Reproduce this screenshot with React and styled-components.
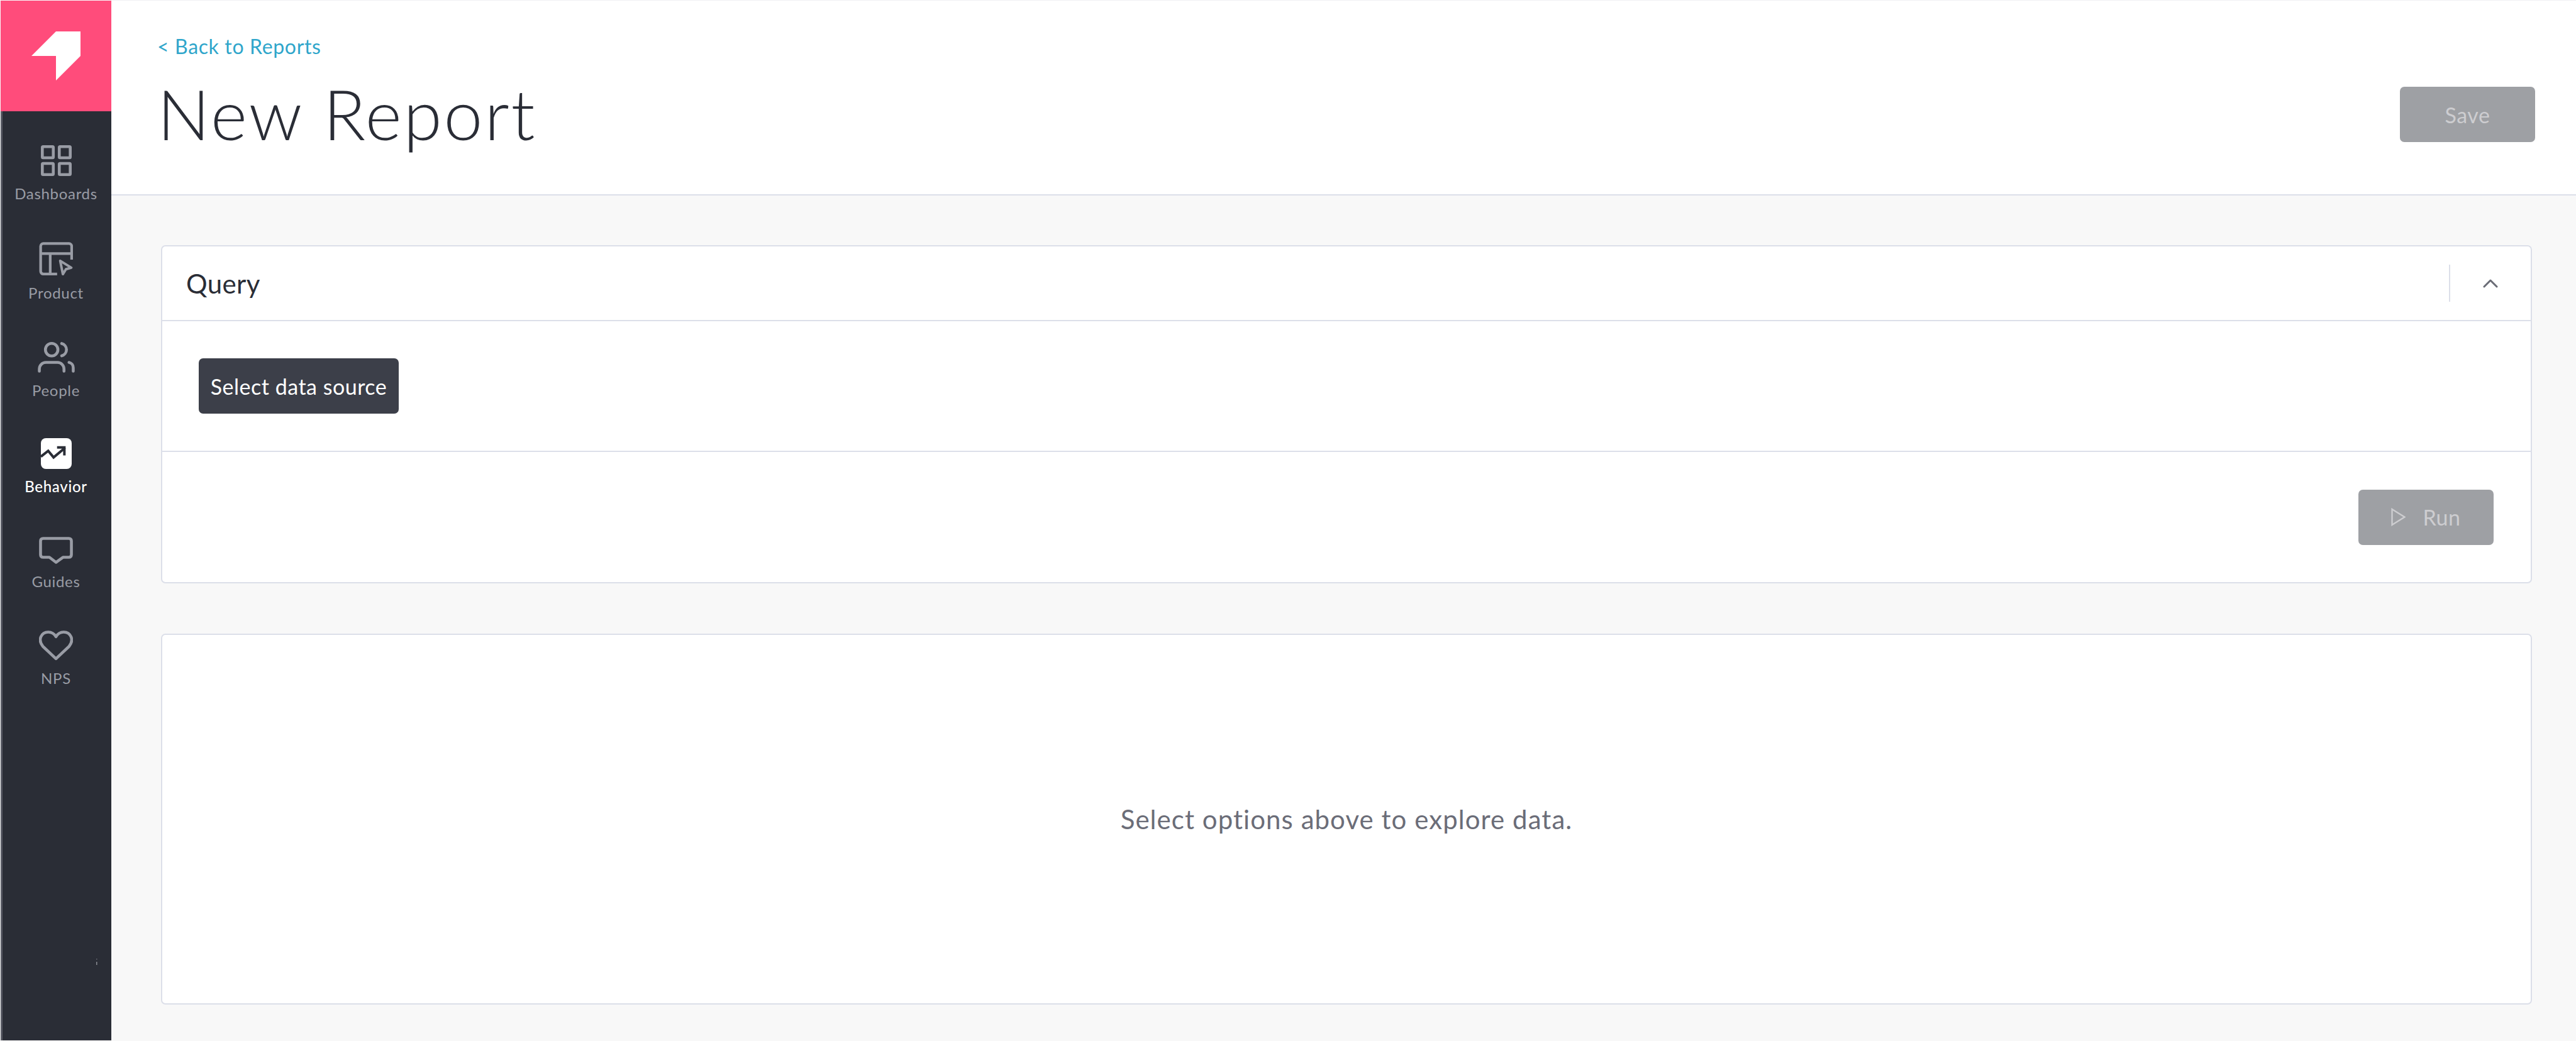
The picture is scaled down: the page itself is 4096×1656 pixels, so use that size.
import React from "react";
import styled, { createGlobalStyle } from "styled-components";

const GlobalStyle = createGlobalStyle`
  html, body {
    margin: 0;
    padding: 0;
    background: #f8f8f8;
  }
  * {
    box-sizing: border-box;
  }
`;

const FONT = `"Lato", "Open Sans", "Liberation Sans", sans-serif`;

const Shell = styled.div`
  display: flex;
  width: 100%;
  height: 100vh;
  font-family: ${FONT};
  background: #f8f8f8;
  overflow: hidden;
`;

const Sidebar = styled.aside`
  width: 176px;
  flex: none;
  margin: 1px 0 1px 1px;
  display: flex;
  flex-direction: column;
  position: relative;
  background: #2a2d36;
`;

const LogoBlock = styled.div`
  height: 176px;
  flex: none;
  display: flex;
  align-items: center;
  justify-content: center;
  background: #ff4c7b;
`;

const Nav = styled.nav`
  flex: 1;
  border-left: 3px solid #5a5c66;
  display: flex;
  flex-direction: column;
`;

const NavItem = styled.a`
  height: ${(p) => p.$height}px;
  display: flex;
  flex-direction: column;
  align-items: center;
  justify-content: flex-end;
  padding-right: 3px;
  color: ${(p) => (p.$active ? "#ffffff" : "#999ca5")};
`;

const NavLabel = styled.span`
  display: block;
  margin-top: 15px;
  font-size: 24px;
  line-height: 26px;
  font-weight: ${(p) => (p.$active ? 500 : 400)};
  letter-spacing: 0.7px;
  white-space: nowrap;
`;

const Handle = styled.svg`
  position: absolute;
  left: 151px;
  top: 1523px;
`;

const Main = styled.main`
  flex: 1;
  min-width: 0;
  display: flex;
  flex-direction: column;
`;

const Header = styled.header`
  height: 311px;
  flex: none;
  display: flex;
  justify-content: space-between;
  align-items: flex-start;
  padding: 0 65px 0 73px;
  background: #ffffff;
  border-top: 1px solid #f1f1f3;
  border-bottom: 2px solid #dcdfe9;
`;

const TitleBlock = styled.div`
  display: flex;
  flex-direction: column;
  padding-top: 51px;
`;

const BackLink = styled.a`
  font-size: 32px;
  line-height: 44px;
  color: #2fa6cb;
  letter-spacing: 0.65px;
`;

const Title = styled.h1`
  margin: 19px 0 0;
  font-size: 111px;
  line-height: 130px;
  font-weight: 300;
  letter-spacing: 2.9px;
  color: #2a2d36;
`;

const Button = styled.button`
  width: ${(p) => p.$width}px;
  height: 88px;
  flex: none;
  display: flex;
  align-items: center;
  justify-content: center;
  gap: ${(p) => p.$gap || 0}px;
  padding: 0;
  border: 0;
  border-radius: 7px;
  font-family: inherit;
  font-size: 34px;
  letter-spacing: 0.5px;
  background: ${(p) => (p.$dark ? "#3c3f49" : "#9ea0a4")};
  color: ${(p) => (p.$dark ? "#ffffff" : "#cdcdd0")};
`;

const SaveButton = styled(Button)`
  margin-top: 137px;
`;

const Content = styled.div`
  flex: 1;
  display: flex;
  flex-direction: column;
  gap: 80px;
  padding: 79px 70px 0 79px;
`;

const Card = styled.section`
  height: ${(p) => p.$height}px;
  flex: none;
  display: flex;
  flex-direction: column;
  background: #ffffff;
  border: 2px solid #dcdfe9;
  border-radius: 7px;
`;

const CardHead = styled.div`
  height: 119px;
  flex: none;
  display: flex;
  align-items: center;
  padding: 0 52px 0 38px;
  border-bottom: 2px solid #dcdfe9;
`;

const CardTitle = styled.h2`
  flex: 1;
  margin: 0;
  font-size: 42px;
  font-weight: 400;
  letter-spacing: 0.4px;
  color: #2a2d36;
`;

const HeadDivider = styled.span`
  width: 2px;
  height: 59px;
  margin-right: 52px;
  background: #dcdfe9;
`;

const CardBody = styled.div`
  height: 208px;
  flex: none;
  display: flex;
  align-items: center;
  padding-left: 58px;
  border-bottom: 2px solid #dcdfe9;
`;

const CardFooter = styled.div`
  flex: 1;
  display: flex;
  align-items: center;
  justify-content: flex-end;
  padding-right: 59px;
`;

const EmptyCard = styled(Card)`
  align-items: center;
  justify-content: center;
  font-size: 42px;
  letter-spacing: 1.05px;
  color: #6b6d78;
`;

const items = [
  {
    label: "Dashboards",
    height: 143.5,
    w: 49,
    h: 49,
    view: "0 0 80 80",
    icon: (
      <g fill="none" stroke="currentColor" strokeWidth="7.5">
        <rect x="3.75" y="3.75" width="28.5" height="29" rx="2" />
        <rect x="47.75" y="3.75" width="28.5" height="29" rx="2" />
        <rect x="3.75" y="47.25" width="28.5" height="29" rx="2" />
        <rect x="47.75" y="47.25" width="28.5" height="29" rx="2" />
      </g>
    ),
  },
  {
    label: "Product",
    height: 158.7,
    w: 54,
    h: 53,
    view: "0 0 88 87",
    icon: (
      <g fill="none" stroke="currentColor" strokeWidth="7" strokeLinejoin="round">
        <path d="M47 83.5H11a7 7 0 0 1-7-7V11a7 7 0 0 1 7-7h67a7 7 0 0 1 7 7v35" />
        <path d="M4 30h81M29 30v53" />
        <path d="M55 49l29 18-14 4-8 13z" strokeWidth="6.5" />
      </g>
    ),
  },
  {
    label: "People",
    height: 154.5,
    w: 59,
    h: 49,
    view: "0 0 96 80",
    icon: (
      <g fill="none" stroke="currentColor" strokeWidth="7.5" strokeLinecap="round">
        <circle cx="36" cy="20" r="16.2" />
        <path d="M62 4a16.5 16.5 0 0 1 0 32" />
        <path d="M4 76v-6a17 17 0 0 1 17-17h30a17 17 0 0 1 17 17v6" />
        <path d="M81 53a14 14 0 0 1 11 14v9" />
      </g>
    ),
  },
  {
    label: "Behavior",
    height: 153.3,
    active: true,
    w: 49,
    h: 49,
    view: "0 0 80 80",
    icon: (
      <g>
        <rect width="80" height="80" rx="13" fill="currentColor" />
        <path
          d="M0 48l19-15 14 17 30-25M42 24h19v21"
          fill="none"
          stroke="#2a2d36"
          strokeWidth="6.5"
        />
      </g>
    ),
  },
  {
    label: "Guides",
    height: 150.8,
    w: 54,
    h: 43,
    view: "0 0 88 70",
    icon: (
      <path
        d="M11 4h66q7 0 7 7v35q0 7-7 7H62l-18 13-17-13H11q-7 0-7-7V11q0-7 7-7z"
        fill="none"
        stroke="currentColor"
        strokeWidth="7.5"
        strokeLinejoin="round"
      />
    ),
  },
  {
    label: "NPS",
    height: 154.5,
    w: 54,
    h: 48,
    view: "0 0 88 78",
    icon: (
      <path
        d="M44 73L10 41C-4 24 6 4 24 4c9 0 16 5 20 12 4-7 11-12 20-12 18 0 28 20 14 37z"
        fill="none"
        stroke="currentColor"
        strokeWidth="7.5"
        strokeLinejoin="round"
      />
    ),
  },
];

const App = () => {
  return (
    <React.Fragment>
      <GlobalStyle />
      <Shell>
        <Sidebar>
          <LogoBlock>
            <svg width="78" height="78" viewBox="0 0 128 128">
              <path d="M64 0h64v64L64 128V64H0z" fill="#ffffff" />
            </svg>
          </LogoBlock>
          <Nav>
            {items.map((item) => (
              <NavItem key={item.label} $height={item.height} $active={item.active}>
                <svg width={item.w} height={item.h} viewBox={item.view}>
                  {item.icon}
                </svg>
                <NavLabel $active={item.active}>{item.label}</NavLabel>
              </NavItem>
            ))}
          </Nav>
          <Handle width="4" height="12" viewBox="0 0 4 12">
            <rect x="1" y="1" width="1.5" height="1.5" fill="#6d6f78" />
            <rect x="1" y="6" width="1.5" height="5" fill="#8b8d94" />
          </Handle>
        </Sidebar>
        <Main>
          <Header>
            <TitleBlock>
              <BackLink>&lt; Back to Reports</BackLink>
              <Title>New Report</Title>
            </TitleBlock>
            <SaveButton $width={215}>Save</SaveButton>
          </Header>
          <Content>
            <Card $height={538}>
              <CardHead>
                <CardTitle>Query</CardTitle>
                <HeadDivider />
                <svg width="24" height="14" viewBox="0 0 24 14">
                  <path
                    d="M2 12L12 2l10 10"
                    fill="none"
                    stroke="#6a6c76"
                    strokeWidth="3"
                    strokeLinecap="round"
                    strokeLinejoin="round"
                  />
                </svg>
              </CardHead>
              <CardBody>
                <Button $dark $width={318}>Select data source</Button>
              </CardBody>
              <CardFooter>
                <Button $width={215} $gap={27}>
                  <svg width="23" height="29" viewBox="0 0 23 29">
                    <path d="M1.5 2l20 12.5-20 12.5z" fill="none" stroke="#cdcdd0" strokeWidth="2.4" />
                  </svg>
                  Run
                </Button>
              </CardFooter>
            </Card>
            <EmptyCard $height={590}>Select options above to explore data.</EmptyCard>
          </Content>
        </Main>
      </Shell>
    </React.Fragment>
  );
};

export default App;
